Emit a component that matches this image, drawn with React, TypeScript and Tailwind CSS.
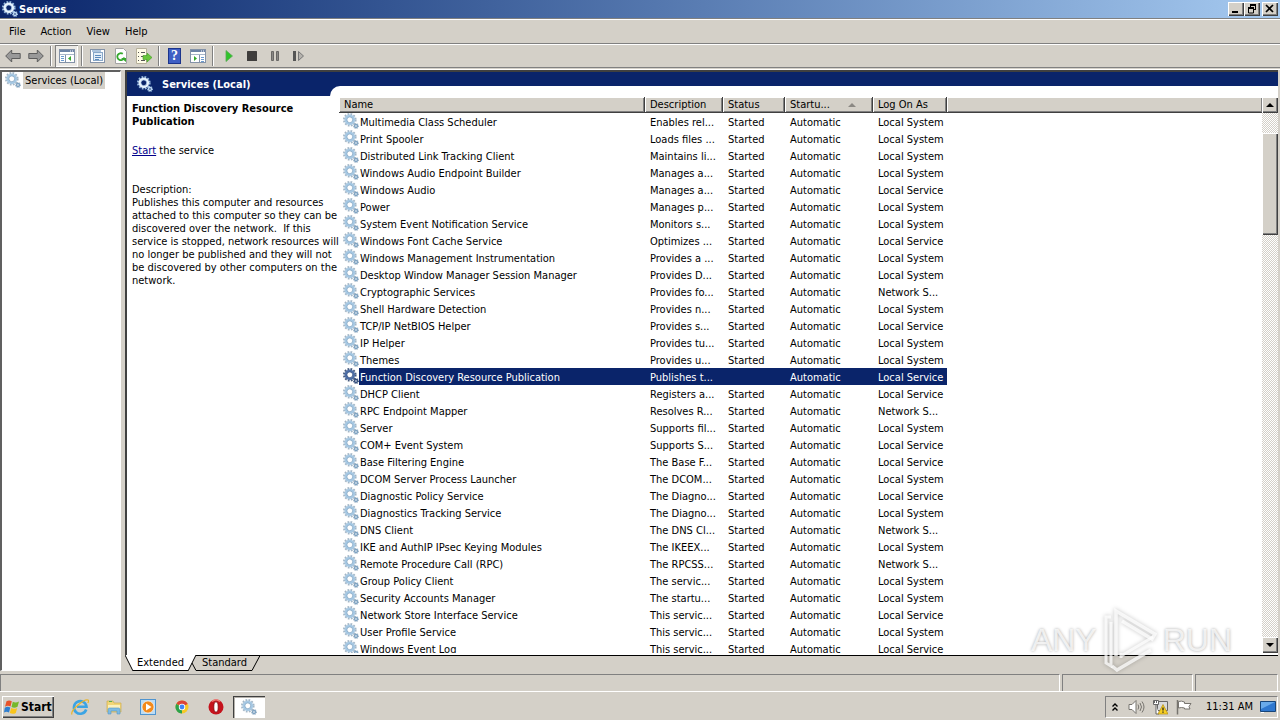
import React from 'react';

type Service = [name: string, description: string, status: string, logOn: string];

const SYS = 'Local System';
const SVC = 'Local Service';
const NET = 'Network S...';

const SERVICES: Service[] = [
    ['Multimedia Class Scheduler', 'Enables rel...', 'Started', SYS],
    ['Print Spooler', 'Loads files ...', 'Started', SYS],
    ['Distributed Link Tracking Client', 'Maintains li...', 'Started', SYS],
    ['Windows Audio Endpoint Builder', 'Manages a...', 'Started', SYS],
    ['Windows Audio', 'Manages a...', 'Started', SVC],
    ['Power', 'Manages p...', 'Started', SYS],
    ['System Event Notification Service', 'Monitors s...', 'Started', SYS],
    ['Windows Font Cache Service', 'Optimizes ...', 'Started', SVC],
    ['Windows Management Instrumentation', 'Provides a ...', 'Started', SYS],
    ['Desktop Window Manager Session Manager', 'Provides D...', 'Started', SYS],
    ['Cryptographic Services', 'Provides fo...', 'Started', NET],
    ['Shell Hardware Detection', 'Provides n...', 'Started', SYS],
    ['TCP/IP NetBIOS Helper', 'Provides s...', 'Started', SVC],
    ['IP Helper', 'Provides tu...', 'Started', SYS],
    ['Themes', 'Provides u...', 'Started', SYS],
    ['Function Discovery Resource Publication', 'Publishes t...', '', SVC],
    ['DHCP Client', 'Registers a...', 'Started', SVC],
    ['RPC Endpoint Mapper', 'Resolves R...', 'Started', NET],
    ['Server', 'Supports fil...', 'Started', SYS],
    ['COM+ Event System', 'Supports S...', 'Started', SVC],
    ['Base Filtering Engine', 'The Base F...', 'Started', SVC],
    ['DCOM Server Process Launcher', 'The DCOM...', 'Started', SYS],
    ['Diagnostic Policy Service', 'The Diagno...', 'Started', SVC],
    ['Diagnostics Tracking Service', 'The Diagno...', 'Started', SYS],
    ['DNS Client', 'The DNS Cl...', 'Started', NET],
    ['IKE and AuthIP IPsec Keying Modules', 'The IKEEX...', 'Started', SYS],
    ['Remote Procedure Call (RPC)', 'The RPCSS...', 'Started', NET],
    ['Group Policy Client', 'The servic...', 'Started', SYS],
    ['Security Accounts Manager', 'The startu...', 'Started', SYS],
    ['Network Store Interface Service', 'This servic...', 'Started', SVC],
    ['User Profile Service', 'This servic...', 'Started', SYS],
    ['Windows Event Log', 'This servic...', 'Started', SVC],
];

const SELECTED = 15;

const DESCRIPTION = [
    'Description:',
    'Publishes this computer and resources',
    'attached to this computer so they can be',
    'discovered over the network.  If this',
    'service is stopped, network resources will',
    'no longer be published and they will not',
    'be discovered by other computers on the',
    'network.',
].join('\n');

const RAISED = 'bg-[#d4d0c8] shadow-[inset_1px_1px_#fff,inset_-1px_-1px_#404040,inset_-2px_-2px_#808080]';

const GEAR_COLORS = {
    list: { teeth: '#a3b6c6', ring: '#a6c8e3', edge: '#7fa3c2', hole: '#fff' },
    selected: { teeth: '#44597c', ring: '#4d6ea6', edge: '#35507f', hole: '#fff' },
    light: { teeth: '#9dbfe2', ring: '#e6f2fd', edge: '#bcd8f2', hole: '#0a246a' },
};

const Gear: React.FC<{ tone?: keyof typeof GEAR_COLORS }> = ({ tone = 'list' }) => {
    const c = GEAR_COLORS[tone];
    return (
        <svg className="h-4 w-4 shrink-0" viewBox="0 0 16 16" fill="none" aria-hidden="true">
            <circle cx="6.8" cy="6.8" r="5.8" stroke={c.teeth} strokeWidth="2" strokeDasharray="1.75 1.287" />
            <circle cx="6.8" cy="6.8" r="4.1" fill={c.hole} stroke={c.ring} strokeWidth="2.4" />
            <circle cx="6.8" cy="6.8" r="2.9" stroke={c.edge} strokeWidth="0.7" />
            <circle cx="13" cy="13" r="2.4" stroke={c.teeth} strokeWidth="1.2" strokeDasharray="1 0.88" />
            <circle cx="13" cy="13" r="1.5" fill={c.hole} stroke={c.edge} strokeWidth="1.4" />
        </svg>
    );
};

const Separator = () => <span className="mx-[3px] h-5 w-[2px] border-l border-[#808080] bg-white" />;

const ToolButton: React.FC<{ label: string; active?: boolean; children: React.ReactNode }> = ({
    label, active, children,
}) => (
    <button
        aria-label={label}
        className={`flex h-[22px] w-[23px] items-center justify-center ${
            active ? 'bg-[#ebe9e5] shadow-[inset_1px_1px_#808080,inset_-1px_-1px_#fff]' : ''
        }`}
    >
        <svg width="16" height="16" viewBox="0 0 16 16" fill="none">{children}</svg>
    </button>
);

const ConsoleIcon: React.FC<{ flip?: boolean }> = ({ flip }) => (
    <>
        <rect x="0.5" y="1.5" width="15" height="13" fill="#fff" stroke="#8392a8" />
        <path d="M1 3h14" stroke="#6d83a6" strokeWidth="2" />
        <path d="M11 3h1M13 3h1" stroke="#fff" />
        <path d="M1 6.500h14" stroke="#a9b6c9" />
        <path d={flip ? 'M9.500 7v7' : 'M6.500 7v7'} stroke="#8392a8" />
        <path d={flip ? 'M11 9.500h3M11 11.500h3M11 13.500h3' : 'M2 8.500h3M2 10.500h3M2 12.500h3'} stroke="#6c9bd0" />
        <path d={flip ? 'M4 8v5l3-2.500z' : 'M12 8v5l-3-2.500z'} fill="#35a82c" />
    </>
);

const WindowButton: React.FC<{ label: string; children: React.ReactNode }> = ({ label, children }) => (
    <button aria-label={label} className={`flex h-[14px] w-4 items-center justify-center ${RAISED}`}>
        <svg width="12" height="10" viewBox="0 0 12 10" fill="none" stroke="#000">{children}</svg>
    </button>
);

const TitleBar = () => (
    <header className="flex h-[18px] shrink-0 items-center bg-linear-to-r from-[#0a246a] to-[#a6caf0] pr-[2px] pl-[2px] text-white">
        <Gear tone="light" />
        <h1 className="ml-px flex-1 font-bold">Services</h1>
        <WindowButton label="Minimize"><path d="M2 8h6" strokeWidth="2" /></WindowButton>
        <WindowButton label="Restore">
            <path d="M4.500 1v2M9.500 1v5M8 5.500h2" />
            <path d="M4 1h6" strokeWidth="2" />
            <path d="M2.500 4v5h5v-5" />
            <path d="M2 4h6" strokeWidth="2" />
        </WindowButton>
        <span className="w-[2px]" />
        <WindowButton label="Close"><path d="M2 1l7 7M9 1l-7 7" strokeWidth="1.700" /></WindowButton>
    </header>
);

const MenuBar = () => (
    <nav className="flex h-[25px] shrink-0 items-center border-t border-b border-t-white border-b-[#808080] pl-px">
        {['File', 'Action', 'View', 'Help'].map((item) => (
            <button key={item} className="px-2 pr-[7px]">{item}</button>
        ))}
    </nav>
);

const Toolbar = () => (
    <div className="flex h-6 shrink-0 items-center border-t border-b border-t-white border-b-[#808080] pl-px">
        <ToolButton label="Back">
            <path d="M0.700 8l6-6v3.500h8.500v5H6.700V14z" fill="#999" stroke="#5d5d5d" />
        </ToolButton>
        <ToolButton label="Forward">
            <path d="M15.300 8l-6-6v3.500H0.800v5h8.500V14z" fill="#999" stroke="#5d5d5d" />
        </ToolButton>
        <Separator />
        <ToolButton label="Show console tree" active><ConsoleIcon /></ToolButton>
        <Separator />
        <ToolButton label="Properties">
            <rect x="0.500" y="1.500" width="14" height="13" fill="#fff" stroke="#8392a8" />
            <rect x="3.500" y="4.500" width="9" height="8" fill="#e4eef8" stroke="#88a7c8" />
            <path d="M2 3h9M5 7.500h6M5 9.500h6M5 11.500h4" stroke="#5c8abb" />
        </ToolButton>
        <ToolButton label="Refresh">
            <path d="M2.500 0.500h8l3 3v12h-11z" fill="#fff" stroke="#a3a3a3" />
            <path d="M11.200 9.500a3.500 3.500 0 1 1-1.400-3.700" stroke="#35a82c" strokeWidth="1.800" />
            <path d="M8 10h5v4z" fill="#35a82c" />
        </ToolButton>
        <ToolButton label="Export list">
            <path d="M0.500 0.500h10v15h-10z" fill="#fffce8" stroke="#b6b09b" />
            <path d="M2 4.500h1M5 4.500h4M2 8.500h1M5 8.500h3M2 12.500h1M5 12.500h4" stroke="#555" />
            <path d="M7 7.500h4V5l5 4.500-5 4.500v-2.500H7z" fill="#69c63c" stroke="#3f9a24" strokeWidth="0.600" />
        </ToolButton>
        <Separator />
        <button aria-label="Help topics" className="flex h-[22px] w-[23px] items-center justify-center">
            <span className="flex h-4 w-[13px] items-center justify-center border border-[#1c348c] bg-[#3f5fc4] font-['Liberation_Serif',serif] text-sm font-bold text-white">?</span>
        </button>
        <ToolButton label="Show action pane"><ConsoleIcon flip /></ToolButton>
        <Separator />
        <ToolButton label="Start service"><path d="M5 2.500v11l6.500-5.500z" fill="#2fc42a" stroke="#58a854" strokeWidth="0.800" /></ToolButton>
        <ToolButton label="Stop service"><rect x="3" y="3" width="10" height="10" rx="0.500" fill="#3f3d3c" /></ToolButton>
        <ToolButton label="Pause service">
            <path d="M4.500 3.500h2v9h-2zM9.500 3.500h2v9h-2z" fill="#8a8885" stroke="#6a6866" />
        </ToolButton>
        <ToolButton label="Restart service">
            <path d="M3 3h3v10H3z" fill="#555" />
            <path d="M8.500 3.500v9l5-4.500z" fill="#b5b2ad" stroke="#777" />
        </ToolButton>
    </div>
);

const HeaderCell: React.FC<{ className?: string; children?: React.ReactNode }> = ({ className = '', children }) => (
    <th
        className={`h-4 overflow-hidden border-b border-[#404040] bg-[#d4d0c8] p-0 pl-[5px] text-left font-normal whitespace-nowrap shadow-[inset_1px_1px_#fff,inset_-1px_-1px_#808080] ${className}`}
    >
        {children}
    </th>
);

const ServiceTable = () => (
    <div className="h-full min-w-0 flex-1 overflow-hidden">
        <table className="w-full table-fixed border-separate border-spacing-0">
            <colgroup>
                <col className="w-[306px]" />
                <col className="w-[78px]" />
                <col className="w-[62px]" />
                <col className="w-[88px]" />
                <col className="w-[74px]" />
                <col />
            </colgroup>
            <thead>
                <tr className="leading-[15px]">
                    <HeaderCell className="border-r">Name</HeaderCell>
                    <HeaderCell className="border-r">Description</HeaderCell>
                    <HeaderCell className="border-r">Status</HeaderCell>
                    <HeaderCell className="border-r">
                        <span className="flex items-center justify-between pr-4">
                            Startu...
                            <svg width="8" height="4" viewBox="0 0 8 4"><path d="M0 4l4-4 4 4z" fill="#8b8883" /></svg>
                        </span>
                    </HeaderCell>
                    <HeaderCell className="border-r">Log On As</HeaderCell>
                    <HeaderCell />
                </tr>
            </thead>
            <tbody>
                {SERVICES.map(([name, description, status, logOn], i) => {
                    const selected = i === SELECTED;
                    const highlight = selected ? 'bg-[#0a246a] text-white' : '';
                    const cell = `h-[17px] p-0 pt-[2px] pl-[5px] whitespace-nowrap ${highlight}`;
                    return (
                        <tr key={name} className="leading-[15px]">
                            <td className="h-[17px] p-0">
                                <div className="flex h-[17px] pl-1">
                                    <Gear tone={selected ? 'selected' : 'list'} />
                                    <span className={`flex-1 pt-[2px] pl-px whitespace-nowrap ${highlight}`}>{name}</span>
                                </div>
                            </td>
                            <td className={cell}>{description}</td>
                            <td className={cell}>{status}</td>
                            <td className={cell}>Automatic</td>
                            <td className={cell}>{logOn}</td>
                            <td />
                        </tr>
                    );
                })}
            </tbody>
        </table>
    </div>
);

const ScrollBar = () => (
    <div className="flex h-full w-4 shrink-0 flex-col bg-[repeating-conic-gradient(#fff_0_25%,#d4d0c8_0_50%)] bg-[length:2px_2px]">
        <button aria-label="Scroll up" className={`flex h-4 items-center justify-center ${RAISED}`}>
            <svg width="8" height="4" viewBox="0 0 8 4"><path d="M0 4l4-4 4 4z" /></svg>
        </button>
        <div className={`mt-5 h-[102px] ${RAISED}`} />
        <button aria-label="Scroll down" className={`mt-auto flex h-4 items-center justify-center ${RAISED}`}>
            <svg width="8" height="4" viewBox="0 0 8 4"><path d="M0 0l4 4 4-4z" /></svg>
        </button>
    </div>
);

const DetailPane = () => (
    <section className="relative z-10 w-[203px] shrink-0">
        <div className="flex h-6 items-center bg-[#0a246a] pl-[10px] text-white">
            <Gear tone="light" />
            <h2 className="ml-[9px] font-bold">Services (Local)</h2>
        </div>
        <div className="pt-[6px] pl-[5px] leading-[13px] whitespace-nowrap">
            <h3 className="font-bold">Function Discovery Resource<br />Publication</h3>
            <p className="mt-4"><a href="#start" className="text-[#00008b] underline">Start</a> the service</p>
            <p className="mt-[26px] whitespace-pre">{DESCRIPTION}</p>
        </div>
    </section>
);

const ViewTabs = () => (
    <div className="flex h-4 shrink-0 leading-[15px]">
        <svg width="8" height="16" viewBox="0 0 8 16"><path d="M0 0h8v16z" fill="#fff" /><path d="M0 0l8 16" stroke="#000" /></svg>
        <button className="border-b border-black bg-white px-1">Extended</button>
        <svg width="14" height="16" viewBox="0 0 14 16" fill="none">
            <path d="M0 0h8L0 16z" fill="#fff" />
            <path d="M8 0L0 16M4 8l4 7.500h6M8 0.500h6" stroke="#000" />
        </svg>
        <button className="border-t border-b border-black leading-[14px]">Standard</button>
        <svg width="14" height="16" viewBox="0 0 14 16" fill="none"><path d="M0 15.500h5L13 0.500M0 0.500h14" stroke="#000" /></svg>
        <span className="flex-1 border-t border-black" />
    </div>
);

const StatusBar = () => (
    <footer className="flex h-[18px] shrink-0 gap-[2px] border-b border-white pr-[2px]">
        <span className="flex-1 border-t border-r border-l border-[#808080] border-r-white" />
        <span className="w-[131px] border-t border-r border-l border-[#808080] border-r-white" />
        <span className="w-[83px] border-t border-r border-l border-[#808080] border-r-white" />
    </footer>
);

const TaskIcon: React.FC<{ label: string; children: React.ReactNode }> = ({ label, children }) => (
    <button aria-label={label} className="flex w-[34px] items-center justify-center">
        <svg width="18" height="18" viewBox="0 0 18 18" fill="none">{children}</svg>
    </button>
);

const Taskbar = () => (
    <div className="flex h-7 shrink-0 items-center pt-px pr-[2px] pl-[2px]">
        <button className={`flex h-[22px] items-center gap-px px-[2px] font-bold ${RAISED}`}>
            <svg width="16" height="16" viewBox="0 0 16 16">
                <path d="M2.500 2.300c2-1.300 3.600-1 5.300 0L6.500 7.600C4.800 6.600 3 6.500 1 7.700z" fill="#e8532a" />
                <path d="M8.800 2.800c2 1.100 4 .9 6.200-.3l-1.500 5.300c-2 1.200-4 1.300-6 .3z" fill="#76b82a" />
                <path d="M.8 8.700c2-1.200 3.800-1 5.500-.1L5 13.500c-2-1.100-3.500-.8-5 0z" fill="#2f7fd0" />
                <path d="M7.200 9.100c2 1 4 .9 6-.2l-1.400 5c-2 1.200-4 1.100-6 .1z" fill="#f9c51c" />
            </svg>
            <span className="text-xs">Start</span>
        </button>
        <div className="ml-[9px] flex">
            <TaskIcon label="Internet Explorer">
                <path d="M15.200 11.500A6.300 6.300 0 1 1 15.500 8.800H6" stroke="#3ba4e4" strokeWidth="2.600" />
                <path d="M1 16.500C-1 12.500 13 .5 17 2c1 .6.500 2-.3 3" stroke="#e9b52c" strokeWidth="1.200" />
            </TaskIcon>
            <TaskIcon label="Windows Explorer">
                <path d="M2 3h6l1 2h7v9H2z" fill="#f2d677" stroke="#cfae4d" strokeWidth="0.700" />
                <path d="M3 7h12v4H3z" fill="#fbf0bd" />
                <path d="M3 16v-4.500q0-1.500 1.500-1.500h9q1.500 0 1.500 1.500V16h-3v-3H6v3z" fill="#7ebbe3" stroke="#5497c6" strokeWidth="0.600" />
                <path d="M4 3.500h3" stroke="#59ad4d" />
            </TaskIcon>
            <TaskIcon label="Media Player">
                <rect x="1.500" y="1.500" width="15" height="15" fill="#bcdcf4" stroke="#4f94cf" />
                <circle cx="9" cy="9" r="6" fill="#f38a1c" stroke="#fff" strokeWidth="0.600" />
                <path d="M7 5.500v7l5.500-3.500z" fill="#fff" />
            </TaskIcon>
            <TaskIcon label="Chrome">
                <circle cx="9" cy="9" r="6.500" fill="#f6c927" />
                <path d="M9 9L3.370 5.750A6.500 6.500 0 0 1 14.630 5.750z" fill="#dc4437" />
                <path d="M9 9h-1L3.370 5.750A6.500 6.500 0 0 0 9 15.500z" fill="#2ba24c" />
                <path d="M9 5.750h5.630L9 9z" fill="#dc4437" />
                <circle cx="9" cy="9" r="3.200" fill="#fff" />
                <circle cx="9" cy="9" r="2.400" fill="#4285f4" />
            </TaskIcon>
            <TaskIcon label="Opera">
                <circle cx="9" cy="9" r="7.500" fill="#c5121c" />
                <path d="M5 3.500Q9 0 13 3.500" stroke="#ee7a74" strokeWidth="1.500" />
                <ellipse cx="9" cy="9" rx="2.200" ry="5.200" fill="#fff" stroke="#7d0a10" strokeWidth="0.800" />
            </TaskIcon>
        </div>
        <button aria-label="Services" className="flex h-[22px] w-8 items-center justify-center bg-white shadow-[inset_1px_1px_#404040,inset_2px_2px_#b5b2ac]">
            <Gear />
        </button>
        <div className="ml-auto flex h-[22px] items-center border border-[#808080] border-r-white border-b-white pr-px pl-[5px]">
            <button aria-label="Show hidden icons">
                <svg width="8" height="10" viewBox="0 0 8 10" fill="none"><path d="M1.500 4.500L4 2l2.500 2.500M1.500 8.500L4 6l2.500 2.500" stroke="#000" strokeWidth="1.400" /></svg>
            </button>
            <svg className="ml-[9px]" width="17" height="16" viewBox="0 0 17 16" fill="none" stroke="#77746f">
                <path d="M1 5.500h3l4-4v13l-4-4H1z" fill="#fff" />
                <path d="M10 5.500q1.500 2.500 0 5M12 4q3 4 0 8M14 2.500q4 5.500 0 11" />
            </svg>
            <svg className="ml-[7px]" width="16" height="16" viewBox="0 0 16 16" fill="none">
                <path d="M5.500 2.500h10v9h-10z" fill="#d9dadb" stroke="#666" />
                <path d="M1.500 1.500h5v4h-5zM4 6v9h3" stroke="#666" fill="#fff" />
                <path d="M2.500 1v3M4.500 1v3" stroke="#666" />
                <path d="M11 5.500l5 9.500H6z" fill="#f7cf22" stroke="#b38e12" strokeWidth="0.700" />
                <path d="M11 8.500v3M11 12.500v1.200" stroke="#222" strokeWidth="1.300" />
            </svg>
            <svg className="ml-2" width="16" height="16" viewBox="0 0 16 16" fill="none" stroke="#77746f">
                <path d="M1.500 1v14.500" strokeWidth="1.500" />
                <path d="M2.500 2.500q3-1 6 .5v1.500h6.500l-2 3 1 2.500H8.500V9q-3-1-6 0z" fill="#fff" />
            </svg>
            <time className="ml-[14px]">11:31 AM</time>
            <svg className="ml-[7px]" width="16" height="14" viewBox="0 0 16 14">
                <path d="M.5 1.500h15v10H.5z" fill="#2f78cf" stroke="#174579" />
                <path d="M1 2h14L1 9z" fill="#69aaea" />
                <path d="M1 12.500h3" stroke="#fff" />
            </svg>
        </div>
    </div>
);

// translucent brand mark floating above the window
const Watermark = () => (
    <div className="pointer-events-none absolute right-12 bottom-12 z-20 flex h-16 items-center gap-[6px] font-['Liberation_Sans_Narrow','Liberation_Sans',sans-serif] text-[32px] leading-none text-white/75 [text-shadow:0_0_3px_rgb(0_0_0/0.35)]">
        <span>ANY</span>
        <svg className="drop-shadow-[0_0_2px_rgb(0_0_0/0.3)]" width="54" height="64" viewBox="0 0 54 64" fill="none" stroke="#fff" strokeOpacity="0.75" strokeWidth="3.500">
            <path d="M8 9H3v46l5 3V14" strokeWidth="3" />
            <path d="M13 48V3l39 23-3 5L19 13" />
            <path d="M18 48l32-19M18 50v-5" strokeWidth="3" />
            <path d="M9 58l5 4 34-20" />
        </svg>
        <span>RUN</span>
    </div>
);

export default function App() {
    return (
        <div className="relative flex h-screen flex-col overflow-hidden bg-[#d4d0c8] font-['DejaVu_Sans_Condensed','DejaVu_Sans',sans-serif] text-[11px] leading-[13px] text-black">
            <TitleBar />
            <div className="h-px shrink-0 bg-[#808080]" />
            <MenuBar />
            <Toolbar />
            <main className="mt-px flex min-h-0 flex-1 gap-1 border-t border-white pr-[2px]">
                <aside className="mb-[3px] w-[121px] shrink-0 border-t-2 border-r border-b border-l-2 border-[#606060] border-r-white border-b-white bg-white">
                    <div className="flex pl-[3px]">
                        <Gear />
                        <span className="ml-[2px] bg-[#d4d0c8] px-[2px] leading-[17px] whitespace-nowrap">Services (Local)</span>
                    </div>
                </aside>
                <div className="mb-[3px] flex min-w-0 flex-1 flex-col">
                    <div className="flex min-h-0 flex-1 border-t-2 border-l-2 border-[#404040] bg-white">
                        <DetailPane />
                        <div className="flex min-w-0 flex-1 flex-col">
                            <div className="h-[14px] shrink-0 bg-[#0a246a]" />
                            <div className="flex min-h-0 flex-1 bg-[linear-gradient(#0a246a_10px,#fff_10px)]">
                                <div className="flex min-w-0 flex-1 rounded-tl-[10px] bg-white pt-[11px] pb-[2px] pl-[9px]">
                                    <ServiceTable />
                                    <ScrollBar />
                                </div>
                            </div>
                        </div>
                    </div>
                    <ViewTabs />
                </div>
            </main>
            <StatusBar />
            <Taskbar />
            <Watermark />
        </div>
    );
}
